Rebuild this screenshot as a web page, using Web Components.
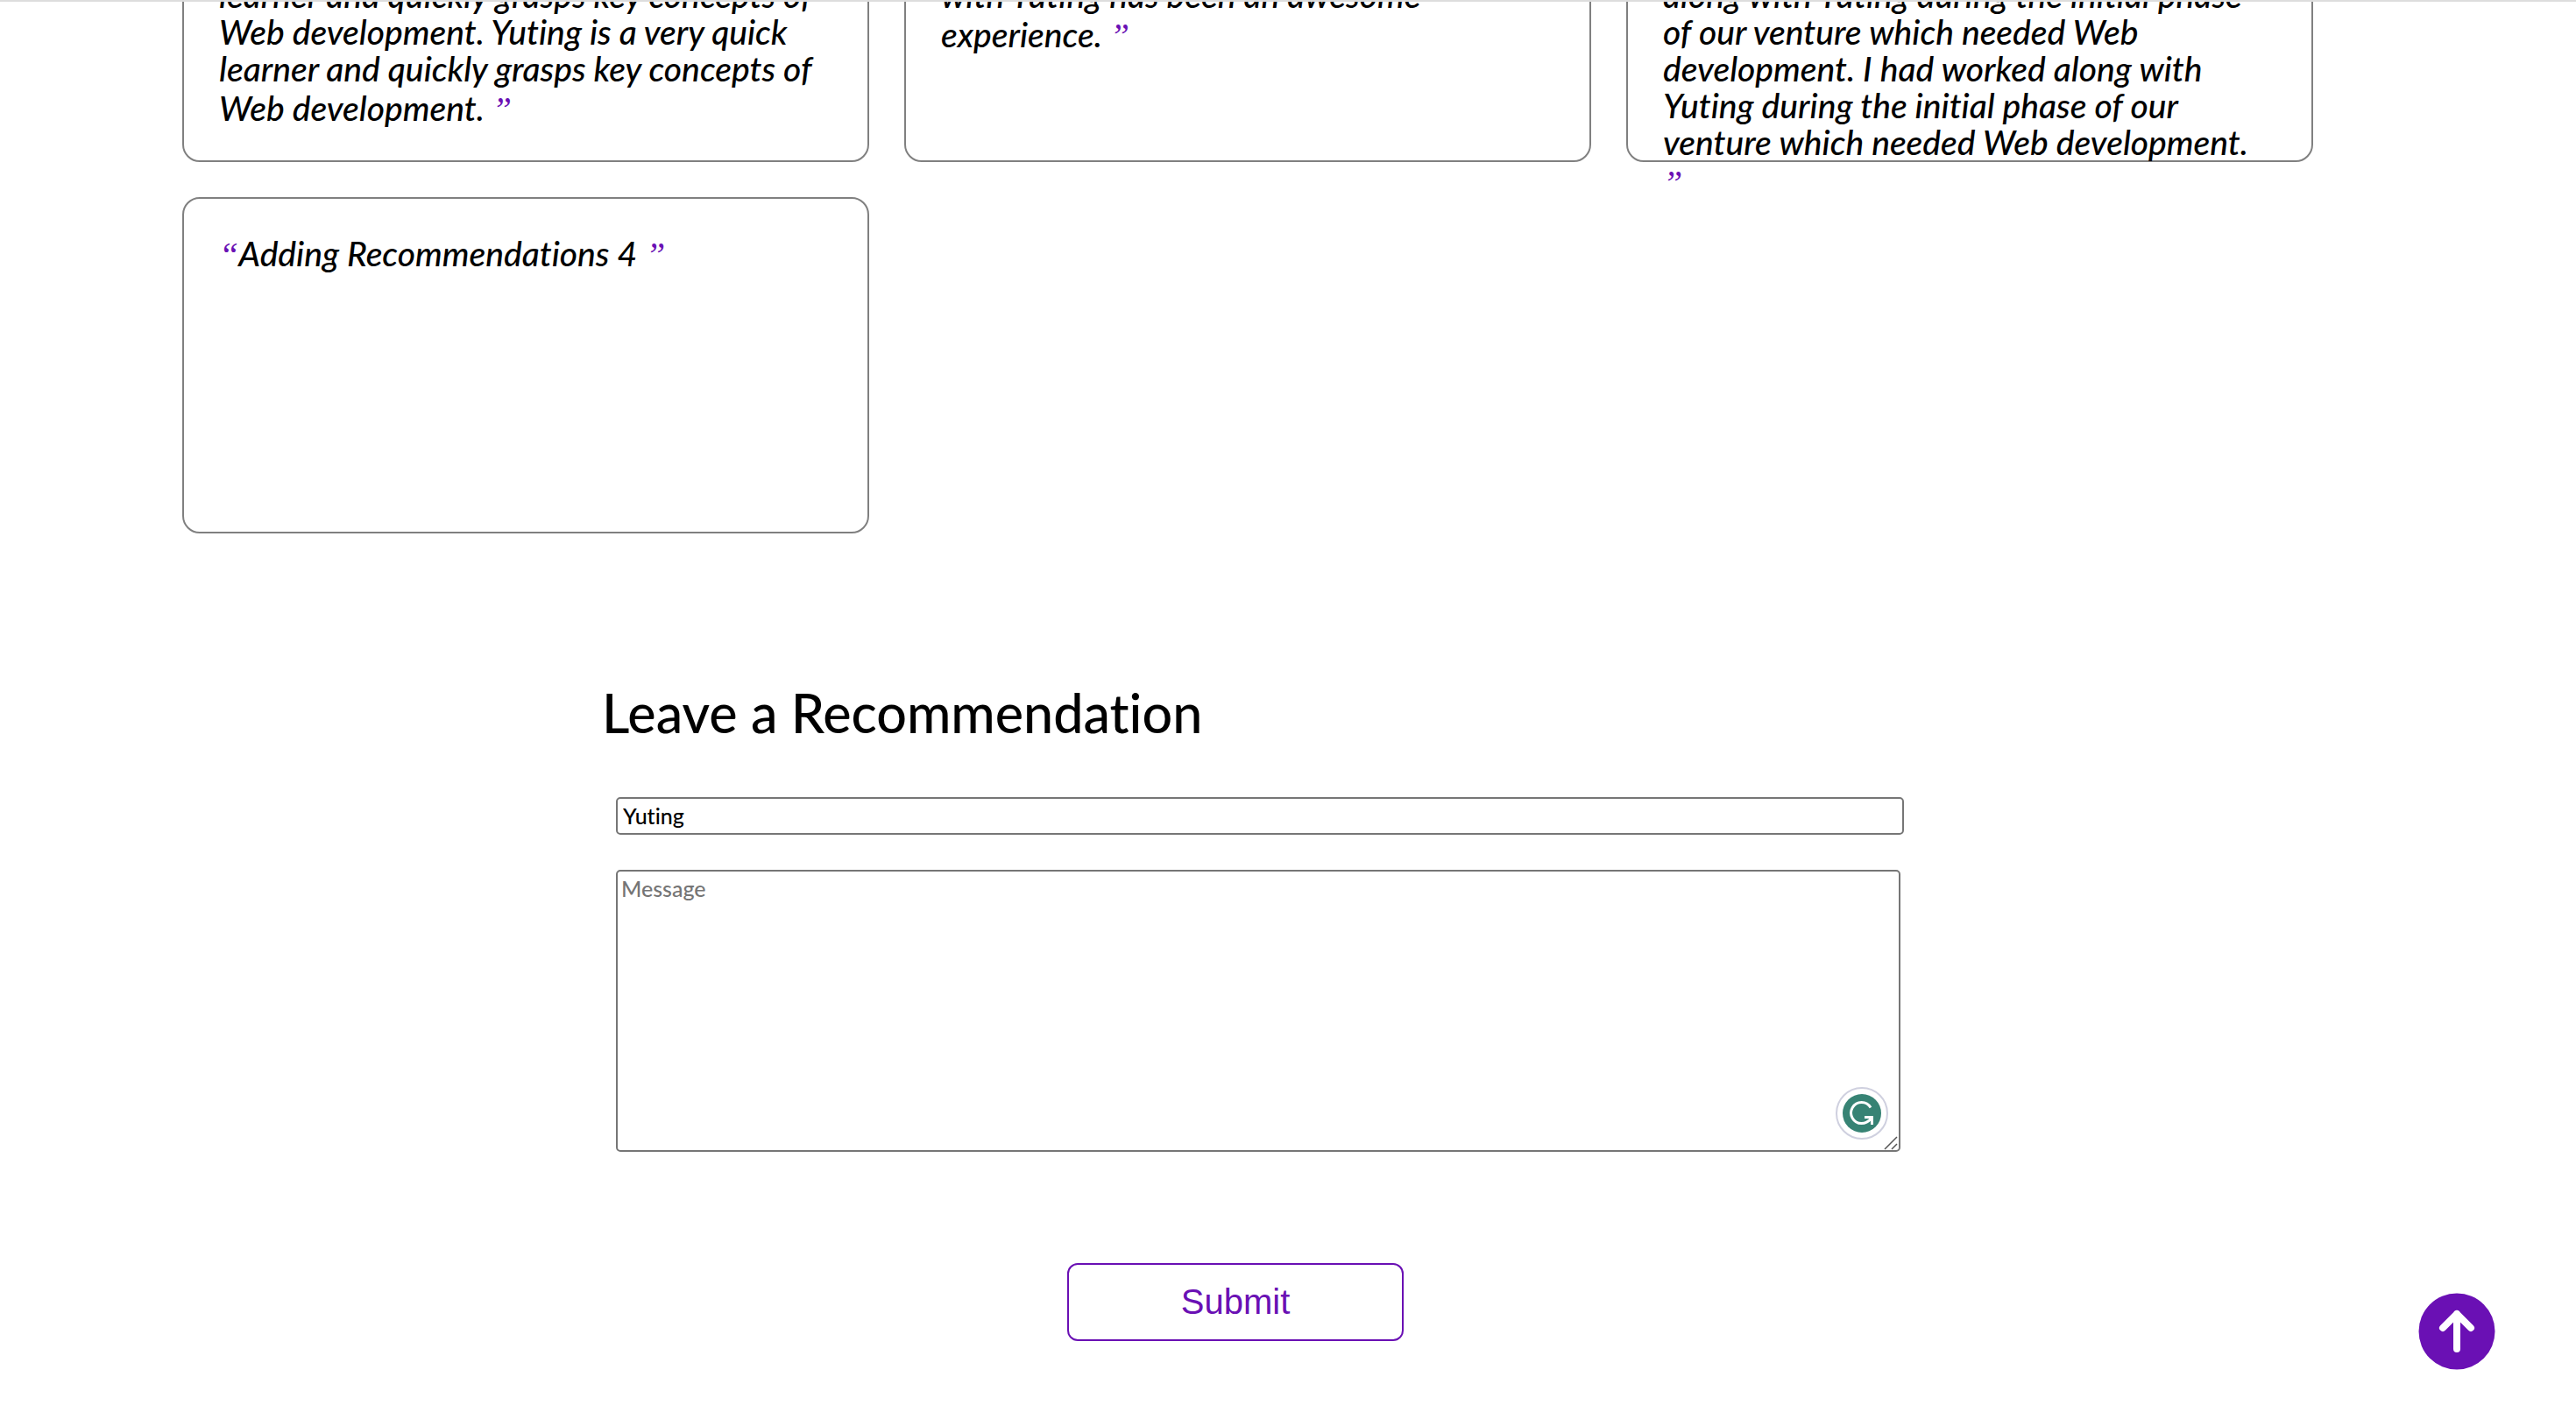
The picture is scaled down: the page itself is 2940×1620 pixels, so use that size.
<!DOCTYPE html>
<html lang="en">
<head>
<meta charset="utf-8">
<title>Recommendations</title>
<style>
html,body{margin:0;background:#fff}
body{border-top:2px solid #ddd;overflow:hidden;min-height:calc(100vh - 2px);color:#000;font-family:"Trebuchet MS",Lato,sans-serif;font-variant-ligatures:none;--accent:#6a10b4}
</style>
</head>
<body>
<recommendation-page></recommendation-page>
<script>
const define = (name, html) => customElements.define(name, class extends HTMLElement {
  constructor() {
    super();
    this.attachShadow({ mode: "open" }).innerHTML = html;
  }
});

define("recommendation-card", `
<style>
:host{display:block;box-sizing:border-box;border:2px solid #808080;border-radius:20px;padding:38px 40px}
p{margin:0;font-size:39px;line-height:42px;font-style:italic;font-weight:500;white-space:nowrap}
::slotted(q-mark){color:var(--accent)}
</style>
<p><slot></slot></p>`);

define("q-mark", `
<style>
:host{display:inline;font-family:"Liberation Serif",serif;font-size:40px;line-height:51px;font-weight:400}
</style><slot></slot>`);

define("recommendation-list", `
<style>
:host{display:grid;grid-template-columns:repeat(3,1fr);grid-template-rows:252px 384px;gap:40px;margin:0 300px 0 208px}
</style>
<slot></slot>`);

define("recommendation-form", `
<style>
:host{display:block}
form{display:flex;flex-direction:column;margin:0}
h1{margin:0;font-size:61px;line-height:70px;font-weight:500}
.fields{display:flex;flex-direction:column;gap:40px;padding:61px 16px 0}
input,textarea{box-sizing:border-box;width:100%;border:2px solid #767676;border-radius:5px;font:500 25px/30px "Trebuchet MS",Lato,sans-serif;font-variant-ligatures:none;color:#000;background:#fff;margin:0;outline:0;display:block}
input{height:43px;padding:1px 6px 3px}
.area{position:relative;margin-right:4px}
textarea{height:322px;padding:4px;resize:none}
::placeholder{color:#757575;opacity:1}
.badge{position:absolute;right:14px;bottom:14px;width:60px;height:60px}
.grip{position:absolute;right:3px;bottom:2px;width:16px;height:16px}
button{align-self:center;width:384px;height:89px;margin:127px 56px 0 0;border:2px solid var(--accent);border-radius:12px;background:#fff;color:var(--accent);font:40px "Liberation Sans",Arial,sans-serif;padding:0}
</style>
<form>
<h1>Leave a Recommendation</h1>
<div class="fields">
<input type="text" aria-label="Name" value="Yuting">
<div class="area">
<textarea aria-label="Message" placeholder="Message"></textarea>
<svg class="badge" viewBox="0 0 60 60" aria-hidden="true"><circle cx="30" cy="30" r="29" fill="#fff" stroke="#cfd0df" stroke-width="2"/><circle cx="30" cy="30" r="22" fill="#378374"/><path d="M40 23.500A12 12 0 1 0 29.500 41.500C34 41.500 37.500 39.500 40.500 36M33 34.500H41.500V43" fill="none" stroke="#fff" stroke-width="3"/></svg>
<svg class="grip" viewBox="0 0 16 16" aria-hidden="true"><path d="M1 15 15 1M9 15 15 9" stroke="#555" stroke-width="1.500"/></svg>
</div>
</div>
<button type="button">Submit</button>
</form>`);

define("scroll-top-link", `
<style>
:host{position:fixed;right:92px;bottom:56px}
a,svg{display:block;width:88px;height:88px}
</style>
<a href="#" aria-label="Back to top"><svg viewBox="0 0 88 88"><circle cx="44" cy="44" r="43.500" fill="var(--accent)"/><path d="M44 64V24M28 40 44 24 60 40" fill="none" stroke="#fff" stroke-width="8" stroke-linecap="round" stroke-linejoin="round"/></svg></a>`);

define("recommendation-page", `
<style>
:host{display:block;overflow:hidden}
recommendation-list{margin-top:-69px}
recommendation-form{margin:170px 751px 0 687px}
</style>
<recommendation-list>
<recommendation-card>learner and quickly grasps key concepts of<br>Web development. Yuting is a very quick<br>learner and quickly grasps key concepts of<br>Web development. <q-mark>”</q-mark></recommendation-card>
<recommendation-card>with Yuting has been an awesome<br>experience. <q-mark>”</q-mark></recommendation-card>
<recommendation-card>along with Yuting during the initial phase<br>of our venture which needed Web<br>development. I had worked along with<br>Yuting during the initial phase of our<br>venture which needed Web development.<br><q-mark>”</q-mark></recommendation-card>
<recommendation-card><q-mark>“</q-mark>Adding Recommendations 4<q-mark>”</q-mark></recommendation-card>
</recommendation-list>
<recommendation-form></recommendation-form>
<scroll-top-link></scroll-top-link>`);
</script>
</body>
</html>
